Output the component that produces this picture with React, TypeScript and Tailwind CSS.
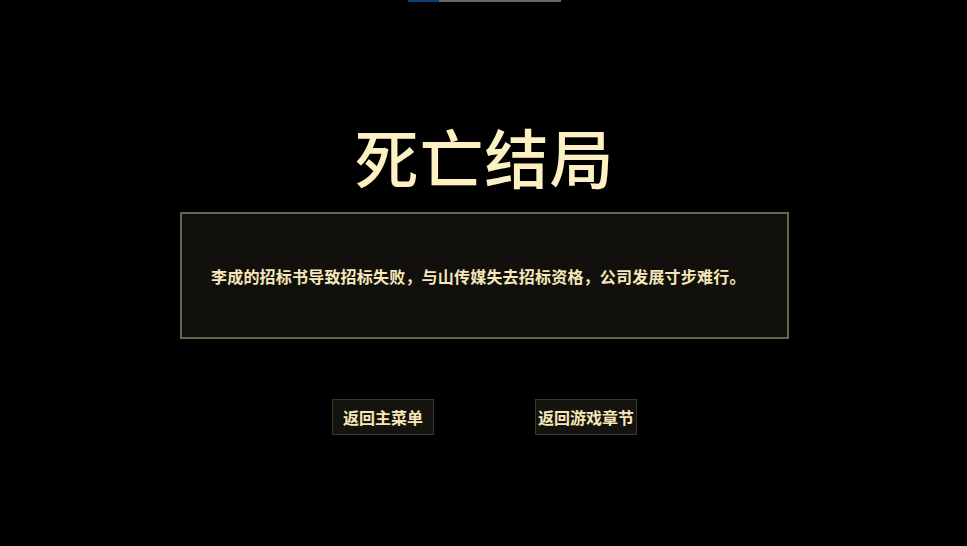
import React from 'react';

const cjk = "font-['Noto_Sans_CJK_SC','Noto_Sans',sans-serif]";

function EndButton({ label }: { label: string }) {
  return (
    <button
      className={`${cjk} w-[102px] h-[36px] flex items-center justify-center bg-[#15130d] border border-[#3b3729] text-[16px] font-semibold text-[#f6e7bb] whitespace-nowrap`}
    >
      {label}
    </button>
  );
}

export default function App() {
  return (
    <div className="relative w-full h-[546px] bg-black overflow-hidden">
      {/* loading strip at the top edge */}
      <div className="flex justify-center pl-[2px]">
        <div className="w-[153px] h-[2px] bg-[#6a6a6a] flex">
          <div className="w-[31px] h-full bg-[#0f3f73]" />
        </div>
      </div>

      <div className="flex flex-col items-center pt-[121px] pl-[2px]">
        <h1 className={`${cjk} text-[64px] leading-none font-medium text-[#fdf0c2] tracking-[1px]`}>
          死亡结局
        </h1>

        <div className="mt-[25px] w-[609px] h-[127px] border-2 border-[#68644f] bg-[#12100c] flex items-center pl-[29px]">
          <p className={`${cjk} text-[16px] font-semibold text-[#f6e7bb] tracking-[0.2px]`}>
            李成的招标书导致招标失败，与山传媒失去招标资格，公司发展寸步难行。
          </p>
        </div>

        <div className="mt-[60px] flex gap-[101px]">
          <EndButton label="返回主菜单" />
          <EndButton label="返回游戏章节" />
        </div>
      </div>
    </div>
  );
}
